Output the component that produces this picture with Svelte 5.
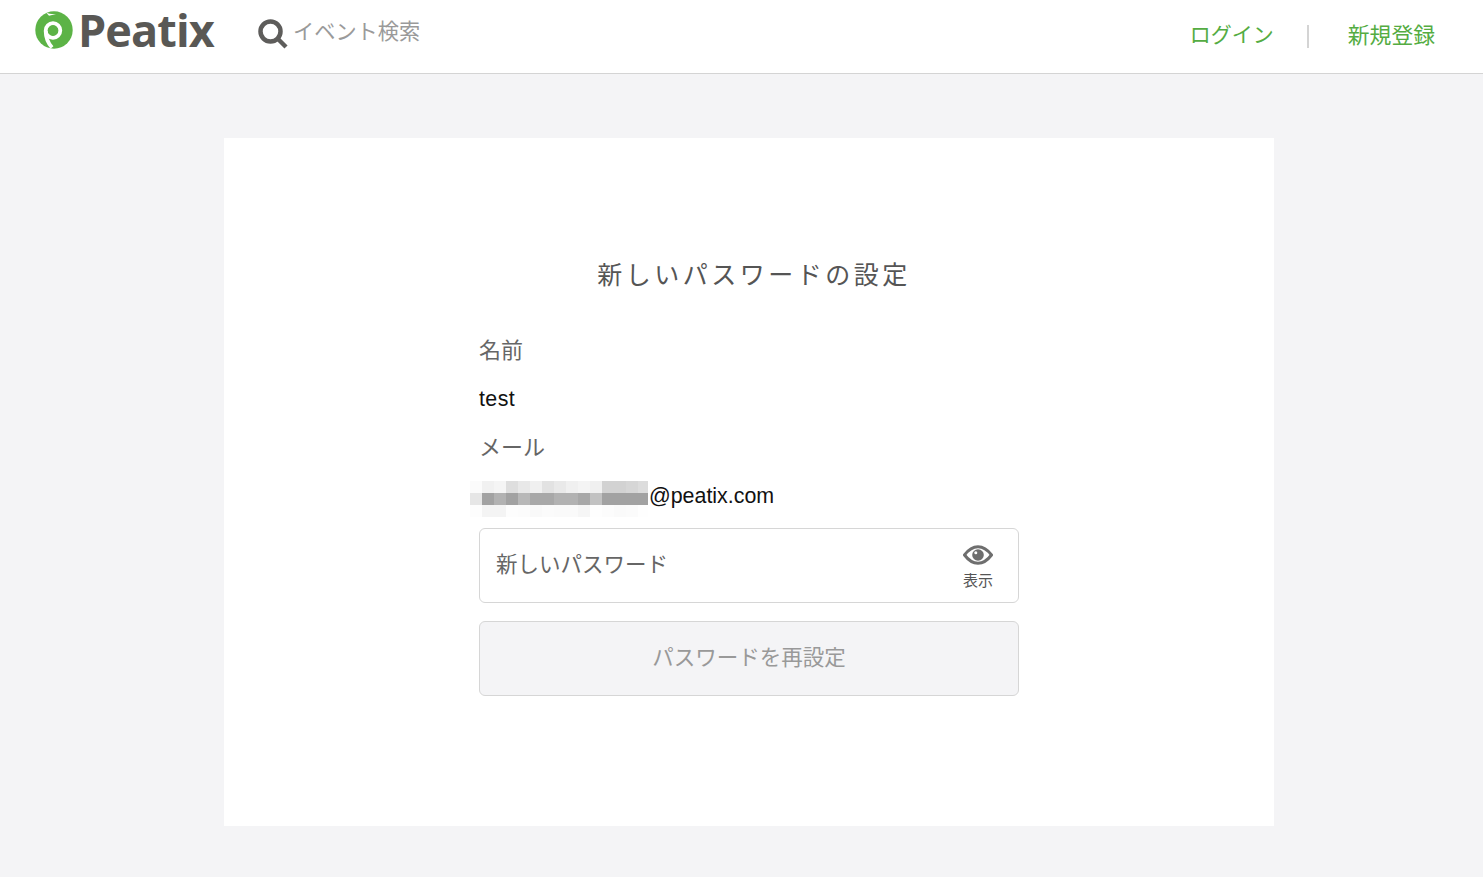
<script lang="ts">
  // mosaic over the hidden part of the address, one hex grey per cell
  const mosaic = [
    ['#fbfbfb', '#f1f1f1', '#f5f5f5', '#dedede', '#e8e8e8', '#f0f0f0', '#e2e2e2', '#e9e9e9', '#f0f0f0', '#f4f4f4', '#f0f0f0', '#d2d2d2', '#d2d2d2', '#d6d6d6', '#dcdcdc'],
    ['#e6e6e6', '#a2a2a2', '#b2b2b2', '#a2a2a2', '#b8b8b8', '#a8a8a8', '#a8a8a8', '#b2b2b2', '#b2b2b2', '#a8a8a8', '#c2c2c2', '#a2a2a2', '#a2a2a2', '#a2a2a2', '#a2a2a2'],
    ['#fdfdfd', '#f4f4f4', '#f4f4f4', '#fdfdfd', '#fcfcfc', '#f9f9f9', '#fbfbfb', '#fafafa', '#fafafa', '#f6f6f6', '#fefefe', '#fcfcfc', '#fafafa', '#fbfbfb', '#fefefe']
  ];
</script>

<header class="topbar">
  <a class="logo" href="#top">
    <svg class="logo-mark" viewBox="0 0 40 40" width="40" height="40" aria-hidden="true">
      <circle cx="20" cy="20" r="18.700" fill="#5cb346" />
      <path d="M12 2.500 C15 3.800 18 4.300 22 4 L15 5.800 Z" fill="#fff" />
      <circle cx="19" cy="20.500" r="7.300" fill="none" stroke="#fff" stroke-width="3.800" />
      <path d="M11.700 21 C11.700 28 14 33 18 37.500" fill="none" stroke="#fff" stroke-width="3.800" />
      <circle cx="19" cy="20.500" r="5" fill="#5cb346" />
    </svg>
    <span class="wordmark">Peatix</span>
  </a>

  <div class="search">
    <svg viewBox="0 0 32 32" width="32" height="32" aria-hidden="true">
      <circle cx="13.500" cy="13.500" r="10" fill="none" stroke="#5e5d5b" stroke-width="4.500" />
      <path d="M21 21 L29 29" stroke="#5e5d5b" stroke-width="4.500" />
    </svg>
    <span>イベント検索</span>
  </div>

  <nav class="account">
    <a class="login" href="#login">ログイン</a>
    <span class="divider"></span>
    <a href="#signup">新規登録</a>
  </nav>
</header>

<main class="page">
  <section class="card">
    <h1>新しいパスワードの設定</h1>

    <form class="form" on:submit|preventDefault>
      <div class="label">名前</div>
      <div class="value name">test</div>
      <div class="label">メール</div>
      <div class="value email">
        <span class="mosaic" aria-hidden="true">
          {#each mosaic as row}
            {#each row as cell}
              <span style="background: {cell}"></span>
            {/each}
          {/each}
        </span>
        <span>@peatix.com</span>
      </div>

      <div class="password">
        <span class="placeholder">新しいパスワード</span>
        <div class="toggle">
          <svg viewBox="0 0 30 20" width="30" height="20" aria-hidden="true">
            <path d="M1.500 10 C6 4 10 1.800 15 1.800 C20 1.800 24 4 28.500 10 C24 16 20 18.200 15 18.200 C10 18.200 6 16 1.500 10 Z" fill="none" stroke="#6e6e6e" stroke-width="3" />
            <circle cx="15" cy="10" r="5.800" fill="#6e6e6e" />
            <circle cx="12.800" cy="7.800" r="1.500" fill="#fff" />
          </svg>
          <span>表示</span>
        </div>
      </div>

      <button class="submit" type="submit" disabled>パスワードを再設定</button>
    </form>
  </section>
</main>

<style>
  :global(body) {
    background: #f4f4f6;
    font-family: "Liberation Sans", "Noto Sans CJK JP", sans-serif;
  }

  a {
    text-decoration: none;
  }

  .topbar {
    display: flex;
    align-items: flex-start;
    height: 73px;
    background: #fff;
    border-bottom: 1px solid #d4d4d4;
    padding-left: 34px;
    padding-right: 48px;
  }

  .logo {
    display: flex;
    align-items: center;
    height: 59px;
    gap: 4px;
    margin-right: 44px;
  }

  .logo-mark {
    flex: none;
  }

  .wordmark {
    font-family: "Open Sans", sans-serif;
    font-weight: 700;
    font-size: 45px;
    line-height: 59px;
    letter-spacing: -0.900px;
    color: #595855;
    width: 135px;
  }

  .search {
    display: flex;
    align-items: center;
    height: 64px;
    gap: 4px;
    font-size: 21.200px;
    color: #9a9a9a;
  }

  .search svg {
    margin-top: 4px;
  }

  .search span {
    margin-top: -6px;
  }

  .account {
    display: flex;
    align-items: center;
    margin-left: auto;
    height: 66px;
    font-size: 21.800px;
  }

  .account a {
    color: #54ac42;
  }

  .account .login {
    font-size: 21px;
  }

  .divider {
    width: 2px;
    height: 23px;
    background: #d4d4d4;
    margin: 7px 39px 0 33px;
  }

  .page {
    display: flex;
    justify-content: center;
    padding: 64px 0 51px 15px;
  }

  .card {
    width: 1050px;
    height: 688px;
    background: #fff;
    box-sizing: border-box;
    padding-top: 120px;
  }

  h1 {
    margin: 0 0 43px;
    padding-left: 10px;
    text-align: center;
    font-size: 25px;
    font-weight: 400;
    line-height: 34px;
    letter-spacing: 3.500px;
    color: #555;
  }

  .form {
    width: 540px;
    margin: 0 auto;
  }

  .label {
    font-size: 22px;
    line-height: 32px;
    color: #666;
    margin-bottom: 16px;
  }

  .value {
    font-size: 21.400px;
    line-height: 32px;
    color: #111;
    margin-bottom: 17px;
  }

  .name {
    letter-spacing: 0.400px;
  }

  .email {
    display: flex;
    margin-bottom: 16px;
  }

  .mosaic {
    display: grid;
    grid-template-columns: repeat(14, 12px) 10px;
    grid-auto-rows: 12px;
    margin: 1px 1px -5px -9px;
    flex: none;
  }

  .password {
    display: flex;
    align-items: center;
    justify-content: space-between;
    box-sizing: border-box;
    height: 75px;
    border: 1px solid #d6d6d6;
    border-radius: 6px;
    padding: 0 25px 0 16px;
    background: #fff;
  }

  .placeholder {
    font-size: 21.500px;
    color: #666;
    margin-top: -6px;
  }

  .toggle {
    display: flex;
    flex-direction: column;
    align-items: center;
    font-size: 15px;
    line-height: 20px;
    color: #555;
    gap: 6px;
    margin-top: 4px;
  }

  .toggle svg {
    display: block;
  }

  .submit {
    display: block;
    width: 100%;
    height: 75px;
    margin-top: 18px;
    padding: 0 0 6px;
    background: #f4f4f6;
    border: 1px solid #d6d6d6;
    border-radius: 6px;
    font: inherit;
    font-size: 21.500px;
    color: #999;
  }
</style>
